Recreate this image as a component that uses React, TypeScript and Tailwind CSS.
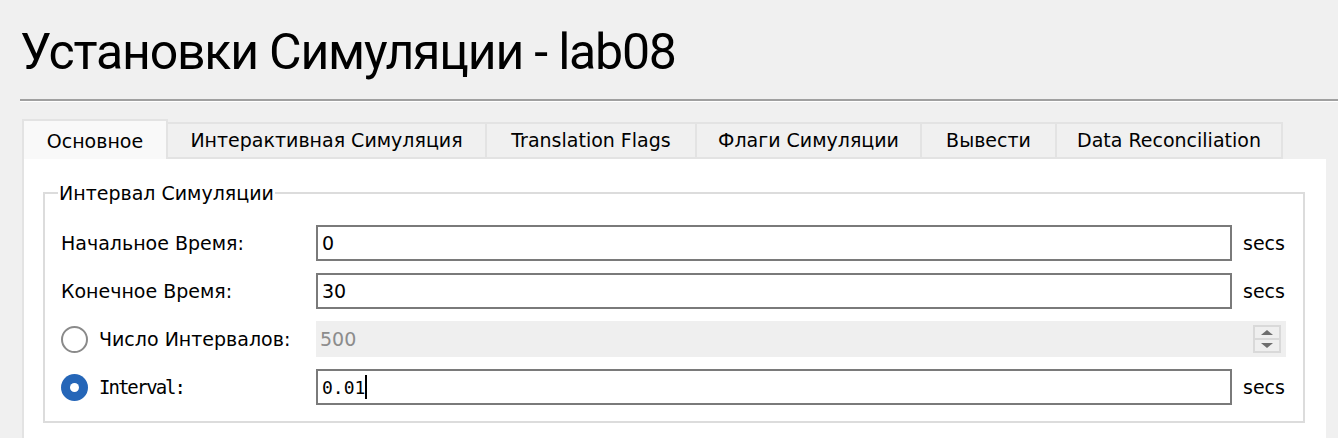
import React from 'react';

const TABS = [
  { label: 'Основное', w: 'w-[146px]', active: true },
  { label: 'Интерактивная Симуляция', w: 'w-[319px]' },
  { label: 'Translation Flags', w: 'w-[210px]' },
  { label: 'Флаги Симуляции', w: 'w-[225px]' },
  { label: 'Вывести', w: 'w-[135px]' },
  { label: 'Data Reconciliation', w: 'w-[226px]' },
];

const Radio: React.FC<{ checked?: boolean }> = ({ checked }) =>
  checked ? (
    <span className="w-[27px] h-[27px] rounded-full bg-[#2566b8] flex items-center justify-center shrink-0">
      <span className="w-[9px] h-[9px] rounded-full bg-white" />
    </span>
  ) : (
    <span className="w-[27px] h-[27px] rounded-full border-2 border-[#8a8a8a] bg-white shrink-0" />
  );

const TextBox: React.FC<{ value: string; caret?: boolean }> = ({ value, caret }) => (
  <div className="h-[36px] border-2 border-[#7a7a7a] bg-white flex items-center px-[4px] text-black">
    {caret ? (
      <span className="font-['DejaVu_Sans_Mono',monospace] text-[18px] flex items-center">
        {value}
        <span className="w-[2px] h-[24px] bg-black" />
      </span>
    ) : (
      <span>{value}</span>
    )}
  </div>
);

const SpinBox: React.FC<{ value: string }> = ({ value }) => (
  <div className="col-span-2 h-[36px] w-[970px] bg-[#efefef] flex items-center pl-[4px] pr-[5px] text-[#8c8c8c]">
    <span className="flex-1">{value}</span>
    <div className="w-[28px] h-[28px] border-2 border-[#d9d9d9] flex flex-col">
      <div className="flex-1 flex items-center justify-center border-b-2 border-[#d9d9d9]">
        <span className="w-0 h-0 border-l-[6px] border-r-[6px] border-b-[5px] border-l-transparent border-r-transparent border-b-[#6e6e6e]" />
      </div>
      <div className="flex-1 flex items-center justify-center">
        <span className="w-0 h-0 border-l-[6px] border-r-[6px] border-t-[5px] border-l-transparent border-r-transparent border-t-[#6e6e6e]" />
      </div>
    </div>
  </div>
);

export default function App() {
  return (
    <div className="w-[1338px] h-[438px] overflow-hidden bg-[#f0f0f0] font-['DejaVu_Sans',sans-serif] text-[19px] text-black">
      {/* Header */}
      <div className="pl-[20px] pt-[22px] h-[99px]">
        <h1 className="font-['Roboto',sans-serif] text-[50px] leading-[60px] font-normal tracking-[-1.2px]">
          Установки Симуляции - lab08
        </h1>
      </div>
      <div className="ml-[20px] border-t-2 border-[#a0a0a0] border-b border-b-white" />

      {/* Tabs */}
      <div className="ml-[22px] mt-[17px] flex items-end h-[40px]">
        {TABS.map((t) =>
          t.active ? (
            <div
              key={t.label}
              className={`${t.w} h-[40px] bg-[#f9f9f9] border-2 border-b-0 border-[#e3e3e3] flex items-center justify-center pt-[2px]`}
            >
              {t.label}
            </div>
          ) : (
            <div
              key={t.label}
              className={`${t.w} h-[37px] bg-[#f0f0f0] border-2 border-l-0 border-[#e3e3e3] flex items-center justify-center pb-[1px]`}
            >
              {t.label}
            </div>
          )
        )}
      </div>

      {/* Panel */}
      <div className="ml-[22px] w-[1304px] h-[280px] bg-white border-l-2 border-[#e3e3e3] pl-[19px] pt-[22px]">
        <fieldset className="w-[1262px] h-[242px] border-2 border-[#dcdcdc] px-[16px] pt-[20px]">
          <legend className="-ml-[3px] px-[1px] leading-[24px]">Интервал Симуляции</legend>
          <div className="grid grid-cols-[255px_916px_1fr] gap-y-[12px] items-center">
            <span>Начальное Время:</span>
            <TextBox value="0" />
            <span className="pl-[11px]">secs</span>

            <span>Конечное Время:</span>
            <TextBox value="30" />
            <span className="pl-[11px]">secs</span>

            <span className="flex items-center gap-[11px]">
              <Radio />
              Число Интервалов:
            </span>
            <SpinBox value="500" />

            <span className="flex items-center gap-[11px]">
              <Radio checked />
              <span className="font-['DejaVu_Sans_Mono',monospace] text-[19px] tracking-[-2px]">Interval:</span>
            </span>
            <TextBox value="0.01" caret />
            <span className="pl-[11px]">secs</span>
          </div>
        </fieldset>
      </div>
    </div>
  );
}
